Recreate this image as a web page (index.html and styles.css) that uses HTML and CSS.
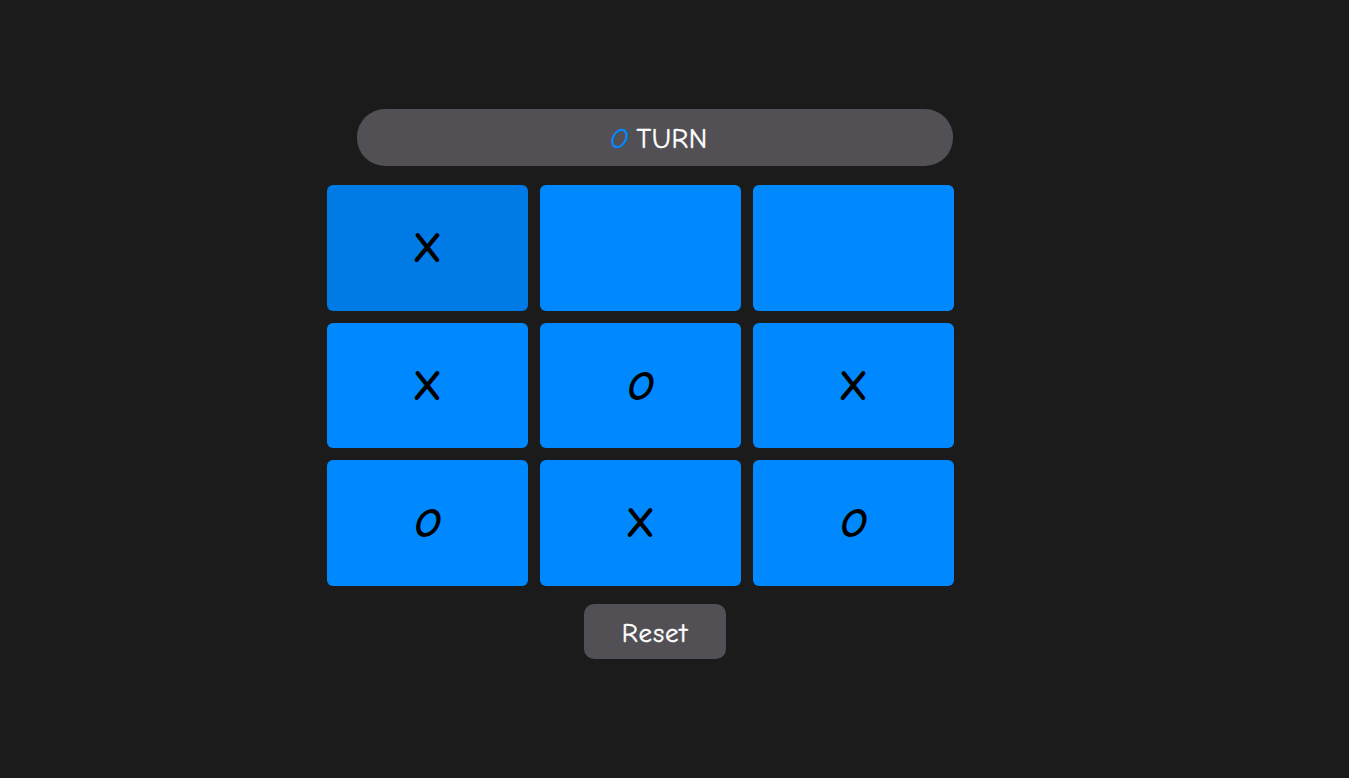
FILE: index.html
```html
<!DOCTYPE html>
<html lang="en">
<head>
<meta charset="utf-8">
<title>Tic Tac Toe</title>
<link rel="stylesheet" href="styles.css">
</head>
<body>
<main class="app">
  <div class="turn"><span class="turn-mark">O</span> TURN</div>
  <div class="board">
    <button class="cell cell-active">X</button>
    <button class="cell"></button>
    <button class="cell"></button>
    <button class="cell">X</button>
    <button class="cell cell-o">O</button>
    <button class="cell">X</button>
    <button class="cell cell-o">O</button>
    <button class="cell">X</button>
    <button class="cell cell-o">O</button>
  </div>
  <button class="reset">Reset</button>
</main>
</body>
</html>
```
FILE: styles.css
```css
html, body {
  margin: 0;
  padding: 0;
  background: #1b1b1b;
  height: 100%;
}
body {
  font-family: "Comic Sans MS", "Comic Neue", "Open Sans", "DejaVu Sans", sans-serif;
}
.app {
  display: flex;
  flex-direction: column;
  align-items: flex-start;
  width: 627px;
  margin-left: 327px;
  padding-top: 109px;
}
.turn {
  margin-left: 30px;
  width: 596px;
  height: 57px;
  border-radius: 28px;
  background: #525055;
  color: #ffffff;
  font-size: 28px;
  font-weight: 400;
  letter-spacing: 0.5px;
  display: flex;
  align-items: center;
  justify-content: center;
  padding: 2px 0 0 8px;
  box-sizing: border-box;
  -webkit-text-stroke: 0.4px #ffffff;
}
.turn-mark {
  color: #0088ff;
  font-style: italic;
  margin-right: 8px;
  -webkit-text-stroke: 0.4px #0088ff;
}
.board {
  margin-top: 19px;
  display: grid;
  grid-template-columns: repeat(3, 201px);
  grid-template-rows: repeat(3, 125.5px);
  gap: 12px;
}
.cell {
  border: none;
  border-radius: 6px;
  background: #0088ff;
  color: #000000;
  font-family: inherit;
  font-size: 42px;
  font-weight: 700;
  padding: 2px 0 0;
  display: flex;
  align-items: center;
  justify-content: center;
}
.cell-active {
  background: #007be5;
}
.cell-o {
  font-style: italic;
}
.reset {
  margin-top: 18.5px;
  margin-left: 257px;
  width: 142px;
  height: 55px;
  border: none;
  border-radius: 10px;
  background: #525055;
  color: #ffffff;
  font-family: inherit;
  font-size: 27px;
  font-weight: 400;
  letter-spacing: 1px;
  padding: 3px 0 0;
  -webkit-text-stroke: 0.4px #ffffff;
}
```
